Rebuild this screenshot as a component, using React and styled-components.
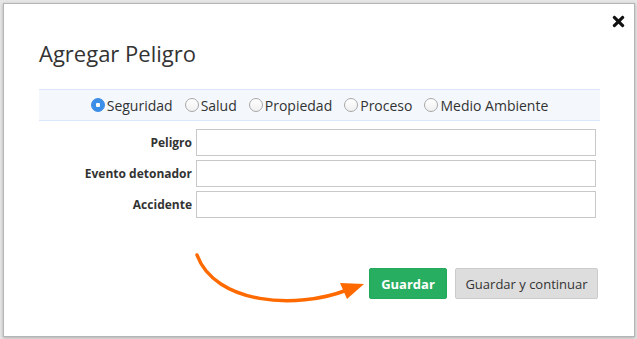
import React, { useState } from "react";
import styled, { createGlobalStyle } from "styled-components";
import { FaTimes } from "react-icons/fa";

const GlobalStyle = createGlobalStyle`
  html, body {
    margin: 0;
    padding: 0;
    background: #e6e6e6;
    font-family: "Open Sans", "Liberation Sans", sans-serif;
  }
  * {
    box-sizing: border-box;
  }
`;

const Page = styled.div`
  padding: 3px 2px 2px 3px;
  height: 339px;
  display: flex;
`;

const Modal = styled.div`
  position: relative;
  flex: 1;
  background: #fff;
  border: 1px solid #b5b5b5;
  box-shadow: 0 1px 3px rgba(0, 0, 0, 0.25);
  padding: 34px 34px 0 35px;
  display: flex;
  flex-direction: column;
`;

const CloseButton = styled.button`
  position: absolute;
  top: 9px;
  right: 7px;
  border: none;
  background: none;
  padding: 0;
  color: #111;
  font-size: 17px;
  line-height: 1;
  cursor: pointer;
  display: flex;
`;

const Title = styled.h2`
  margin: 0;
  font-size: 22px;
  line-height: 30px;
  font-weight: 400;
  color: #333;
`;

const RadioBar = styled.div`
  margin-top: 21px;
  height: 32px;
  background: #f4f8fd;
  border-top: 1px solid #d8e7f9;
  border-bottom: 1px solid #d8e7f9;
  display: flex;
  justify-content: center;
  align-items: center;
  gap: 12px;
`;

const RadioLabel = styled.label`
  display: flex;
  align-items: center;
  gap: 2px;
  font-size: 14px;
  color: #333;
  cursor: pointer;
`;

const RadioInput = styled.input`
  appearance: none;
  margin: 0;
  width: 14px;
  height: 14px;
  border-radius: 50%;
  border: 1px solid ${(p) => (p.checked ? "#3a8ae4" : "#a8a8a8")};
  background: ${(p) =>
    p.checked
      ? "radial-gradient(circle, #fff 0 2px, #3c8fe8 2.5px)"
      : "linear-gradient(#fff, #f0f0f0)"};
  cursor: pointer;
`;

const Form = styled.div`
  margin-top: 8px;
  padding-right: 4px;
  display: grid;
  grid-template-columns: 153px 1fr;
  column-gap: 4px;
  row-gap: 4px;
  align-items: center;
`;

const FieldLabel = styled.label`
  text-align: right;
  font-size: 12px;
  font-weight: 700;
  color: #333;
`;

const TextInput = styled.input`
  height: 27px;
  border: 1px solid #c8c8c8;
  padding: 0 6px;
  font-size: 13px;
  font-family: inherit;
  outline: none;
`;

const Actions = styled.div`
  margin-top: 50px;
  padding-right: 2px;
  display: flex;
  justify-content: flex-end;
  gap: 8px;
`;

const Button = styled.button`
  height: 31px;
  padding: 0;
  white-space: nowrap;
  border-radius: 2px;
  font-family: inherit;
  font-size: 13px;
  cursor: pointer;
  border: 1px solid ${(p) => (p.$primary ? "#24a85b" : "#cbcbcb")};
  background: ${(p) => (p.$primary ? "#27ae60" : "#dddddd")};
  color: ${(p) => (p.$primary ? "#fff" : "#333")};
  font-weight: ${(p) => (p.$primary ? 700 : 400)};
  width: ${(p) => p.$width}px;
`;

const Arrow = styled.svg`
  position: absolute;
  left: 0;
  top: 0;
  width: 637px;
  height: 339px;
  pointer-events: none;
`;

const categories = ["Seguridad", "Salud", "Propiedad", "Proceso", "Medio Ambiente"];
const fields = ["Peligro", "Evento detonador", "Accidente"];

const App = () => {
  const [category, setCategory] = useState("Seguridad");

  return (
    <>
      <GlobalStyle />
      <Page>
        <Modal>
          <CloseButton aria-label="Cerrar">
            <FaTimes />
          </CloseButton>
          <Title>Agregar Peligro</Title>
          <RadioBar>
            {categories.map((c) => (
              <RadioLabel key={c}>
                <RadioInput
                  type="radio"
                  name="categoria"
                  checked={category === c}
                  onChange={() => setCategory(c)}
                />
                {c}
              </RadioLabel>
            ))}
          </RadioBar>
          <Form>
            {fields.map((f) => (
              <React.Fragment key={f}>
                <FieldLabel>{f}</FieldLabel>
                <TextInput type="text" />
              </React.Fragment>
            ))}
          </Form>
          <Actions>
            <Button $primary $width={78}>Guardar</Button>
            <Button $width={143}>Guardar y continuar</Button>
          </Actions>
        </Modal>
      </Page>
      <Arrow viewBox="0 0 637 339">
        <path
          d="M197 255 C215 304, 296 310, 347 290"
          fill="none"
          stroke="#ff6a00"
          strokeWidth="3.5"
          strokeLinecap="round"
        />
        <polygon points="340,283 364,284 347,299" fill="#ff6a00" />
      </Arrow>
    </>
  );
};

export default App;
